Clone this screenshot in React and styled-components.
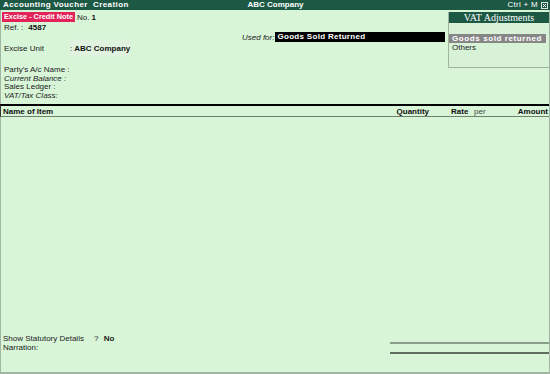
import React from "react";
import styled, { createGlobalStyle } from "styled-components";

const Global = createGlobalStyle`
  html, body { margin: 0; padding: 0; }
  body { font-family: "Liberation Sans", Arial, sans-serif; font-size: 8px; color: #111; }
`;

const Screen = styled.div`
  width: 550px;
  height: 374px;
  background: #d8f5d8;
  display: flex;
  flex-direction: column;
  box-sizing: border-box;
  overflow: hidden;
`;

const TitleBar = styled.div`
  height: 10px;
  background: #1d5845;
  color: #fff;
  display: grid;
  grid-template-columns: 1fr auto 1fr;
  align-items: center;
  padding: 0 2px 0 3px;
  font-size: 8px;
  line-height: 10px;
`;

const TitleText = styled.span`
  font-weight: bold;
  white-space: pre;
  letter-spacing: ${(p) => p.$ls || "0"};
  justify-self: ${(p) => p.$align || "start"};
`;

const TitleRight = styled.div`
  justify-self: end;
  display: flex;
  align-items: center;
  gap: 3px;
  font-weight: normal;
  letter-spacing: 0.3px;
`;

const Body = styled.div`
  flex: 1;
  display: flex;
  flex-direction: column;
  border-left: 1px solid #a3b5a3;
  border-right: 1px solid #a3b5a3;
  border-bottom: 2px solid #a3b5a3;
  min-height: 0;
`;

const Top = styled.div`
  height: 94px;
  display: flex;
`;

const LeftPane = styled.div`
  flex: 1;
  padding: 2px 0 0 1px;
  display: flex;
  flex-direction: column;
`;

const Row = styled.div`
  display: flex;
  align-items: center;
  height: ${(p) => p.$h || 8}px;
  margin-top: ${(p) => p.$mt || 0}px;
  padding-left: ${(p) => p.$pl || 0}px;
`;

const VoucherTag = styled.span`
  background: #e2245a;
  color: #fff;
  font-weight: bold;
  font-size: 7.3px;
  line-height: 10px;
  padding: 0 2px 0 2px;
  margin-right: 2px;
`;

const Label = styled.span`
  font-style: ${(p) => (p.$italic ? "italic" : "normal")};
  width: ${(p) => (p.$w ? p.$w + "px" : "auto")};
  flex-shrink: 0;
  white-space: pre;
  color: #222;
`;

const Value = styled.span`
  font-weight: bold;
  white-space: nowrap;
  margin-left: ${(p) => p.$ml || 0}px;
`;

const UsedForRow = styled.div`
  display: flex;
  align-items: center;
  height: 10px;
  margin-top: 1px;
  padding-left: 240px;
`;

const BlackField = styled.div`
  margin-left: 1px;
  width: 168px;
  height: 10px;
  background: #000;
  color: #fff;
  font-weight: bold;
  letter-spacing: 0.3px;
  line-height: 10px;
  padding-left: 2px;
`;

const ExciseRow = styled.div`
  display: flex;
  align-items: center;
  padding-left: 2px;
  margin-top: -3px;
`;

const UnitBox = styled.div`
  width: 60px;
  height: 18px;
  background: #e0f3df;
  display: flex;
  align-items: center;
  box-sizing: border-box;
  white-space: nowrap;
`;

const PartyBlock = styled.div`
  margin-top: 9px;
  padding-left: 2px;
  display: flex;
  flex-direction: column;
`;

const PartyLine = styled.div`
  height: 8.5px;
  line-height: 8.5px;
  font-style: ${(p) => (p.$italic ? "italic" : "normal")};
  color: #222;
`;

const VatPanel = styled.div`
  width: 100px;
  margin-top: 2px;
  height: 55px;
  border-left: 1px solid #9fb39f;
  border-bottom: 1px solid #9fb39f;
  display: flex;
  flex-direction: column;
  background: #d8f2d8;
`;

const VatHeader = styled.div`
  height: 11px;
  background: #1d5845;
  color: #fff;
  font-family: "Liberation Serif", "Times New Roman", serif;
  font-size: 10px;
  line-height: 11px;
  text-align: center;
`;

const VatItem = styled.div`
  height: ${(p) => p.$h || 9}px;
  line-height: ${(p) => p.$h || 9}px;
  padding-left: 3px;
  margin: 0 3px 0 0;
  background: ${(p) => (p.$active ? "#868686" : "transparent")};
  color: ${(p) => (p.$active ? "#fff" : "#222")};
  font-weight: ${(p) => (p.$active ? "bold" : "normal")};
  letter-spacing: ${(p) => (p.$active ? "0.6px" : "0")};
  margin-top: ${(p) => p.$mt || 0}px;
`;

const ColumnHeader = styled.div`
  border-top: 2px solid #000;
  border-bottom: 1px solid #6e806e;
  border-left: 1px solid #333;
  margin-left: -1px;
  height: 10px;
  display: grid;
  grid-template-columns: 1fr 40px 41px 15px 63px;
  align-items: center;
  font-weight: bold;
  padding: 0 1px 0 2px;
`;

const ColCell = styled.span`
  text-align: ${(p) => p.$align || "left"};
  font-weight: ${(p) => (p.$light ? "normal" : "bold")};
  color: ${(p) => (p.$light ? "#444" : "#111")};
  padding-left: ${(p) => p.$pl || 0}px;
  white-space: nowrap;
`;

const ItemsArea = styled.div`
  flex: 1;
`;

const Footer = styled.div`
  height: 40px;
  display: flex;
`;

const FooterLeft = styled.div`
  flex: 1;
  padding: 2px 0 0 2px;
  display: flex;
  flex-direction: column;
`;

const FooterRow = styled.div`
  height: 9px;
  line-height: 9px;
  display: flex;
  color: #222;
`;

const Totals = styled.div`
  width: 159px;
  padding-top: 10px;
  display: flex;
  flex-direction: column;
  gap: 8px;
`;

const Rule = styled.div`
  height: 2px;
  background: ${(p) => p.$color};
`;

function CloseBox() {
  return (
    <svg width="7" height="7" viewBox="0 0 7 7">
      <rect x="0.5" y="0.5" width="6" height="6" fill="#1d5845" stroke="#d8e8d8" strokeWidth="1" />
      <path d="M2 2 L5 5 M5 2 L2 5" stroke="#fff" strokeWidth="1" />
    </svg>
  );
}

export default function App() {
  return (
    <>
      <Global />
      <Screen>
        <TitleBar>
          <TitleText $ls="0.4px">{"Accounting Voucher  Creation"}</TitleText>
          <TitleText $align="center">ABC Company</TitleText>
          <TitleRight>
            <span>Ctrl + M</span>
            <CloseBox />
          </TitleRight>
        </TitleBar>
        <Body>
          <Top>
            <LeftPane>
              <Row $h={10}>
                <VoucherTag>Excise - Credit Note</VoucherTag>
                <Label>No. </Label>
                <Value>1</Value>
              </Row>
              <Row $h={8} $pl={2} $mt={1}>
                <Label>Ref. : </Label>
                <Value $ml={3}>4587</Value>
              </Row>
              <UsedForRow>
                <Label $italic>Used for:</Label>
                <BlackField>Goods Sold Returned</BlackField>
              </UsedForRow>
              <ExciseRow>
                <Label $w={66}>Excise Unit</Label>
                <UnitBox>
                  <Label>:</Label>
                  <Value $ml={2}>ABC Company</Value>
                </UnitBox>
              </ExciseRow>
              <PartyBlock>
                <PartyLine>Party's A/c Name :</PartyLine>
                <PartyLine $italic>Current Balance :</PartyLine>
                <PartyLine>Sales Ledger :</PartyLine>
                <PartyLine $italic>VAT/Tax Class:</PartyLine>
              </PartyBlock>
            </LeftPane>
            <VatPanel>
              <VatHeader>VAT Adjustments</VatHeader>
              <VatItem $h={10} />
              <VatItem $active $mt={1}>Goods sold returned</VatItem>
              <VatItem>Others</VatItem>
            </VatPanel>
          </Top>
          <ColumnHeader>
            <ColCell>Name of Item</ColCell>
            <ColCell $align="right">Quantity</ColCell>
            <ColCell $pl={22}>Rate</ColCell>
            <ColCell $light $pl={4}>per</ColCell>
            <ColCell $align="right">Amount</ColCell>
          </ColumnHeader>
          <ItemsArea />
          <Footer>
            <FooterLeft>
              <FooterRow>
                <Label $w={91}>Show Statutory Details</Label>
                <Label>? </Label>
                <Value $ml={3}>No</Value>
              </FooterRow>
              <FooterRow>
                <Label>Narration:</Label>
              </FooterRow>
            </FooterLeft>
            <Totals>
              <Rule $color="#8a9e8a" />
              <Rule $color="#5f6f62" />
            </Totals>
          </Footer>
        </Body>
      </Screen>
    </>
  );
}
